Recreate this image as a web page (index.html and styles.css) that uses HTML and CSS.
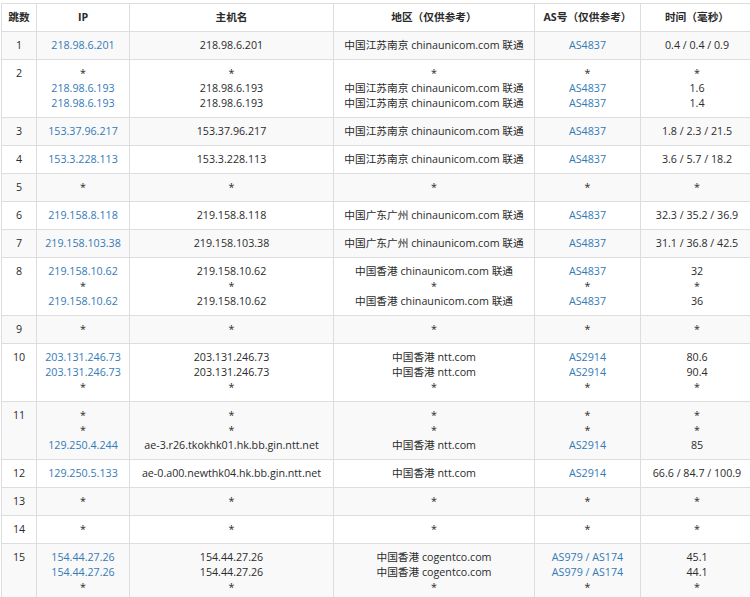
FILE: index.html
```html
<!DOCTYPE html>
<html lang="zh-CN">
<head>
<meta charset="utf-8">
<title>Traceroute</title>
<link rel="stylesheet" href="styles.css">
</head>
<body>
<table class="trace">
<colgroup>
<col class="c-hop"><col class="c-ip"><col class="c-host"><col class="c-loc"><col class="c-as"><col class="c-time">
</colgroup>
<thead>
<tr><th>跳数</th><th>IP</th><th>主机名</th><th>地区（仅供参考）</th><th>AS号（仅供参考）</th><th>时间（毫秒）</th></tr>
</thead>
<tbody>
<tr><td>1</td><td><a>218.98.6.201</a></td><td>218.98.6.201</td><td>中国江苏南京 chinaunicom.com 联通</td><td><a>AS4837</a></td><td>0.4 / 0.4 / 0.9</td></tr>
<tr><td>2</td><td>*<br><a>218.98.6.193</a><br><a>218.98.6.193</a></td><td>*<br>218.98.6.193<br>218.98.6.193</td><td>*<br>中国江苏南京 chinaunicom.com 联通<br>中国江苏南京 chinaunicom.com 联通</td><td>*<br><a>AS4837</a><br><a>AS4837</a></td><td>*<br>1.6<br>1.4</td></tr>
<tr><td>3</td><td><a>153.37.96.217</a></td><td>153.37.96.217</td><td>中国江苏南京 chinaunicom.com 联通</td><td><a>AS4837</a></td><td>1.8 / 2.3 / 21.5</td></tr>
<tr><td>4</td><td><a>153.3.228.113</a></td><td>153.3.228.113</td><td>中国江苏南京 chinaunicom.com 联通</td><td><a>AS4837</a></td><td>3.6 / 5.7 / 18.2</td></tr>
<tr><td>5</td><td>*</td><td>*</td><td>*</td><td>*</td><td>*</td></tr>
<tr><td>6</td><td><a>219.158.8.118</a></td><td>219.158.8.118</td><td>中国广东广州 chinaunicom.com 联通</td><td><a>AS4837</a></td><td>32.3 / 35.2 / 36.9</td></tr>
<tr><td>7</td><td><a>219.158.103.38</a></td><td>219.158.103.38</td><td>中国广东广州 chinaunicom.com 联通</td><td><a>AS4837</a></td><td>31.1 / 36.8 / 42.5</td></tr>
<tr><td>8</td><td><a>219.158.10.62</a><br>*<br><a>219.158.10.62</a></td><td>219.158.10.62<br>*<br>219.158.10.62</td><td>中国香港 chinaunicom.com 联通<br>*<br>中国香港 chinaunicom.com 联通</td><td><a>AS4837</a><br>*<br><a>AS4837</a></td><td>32<br>*<br>36</td></tr>
<tr><td>9</td><td>*</td><td>*</td><td>*</td><td>*</td><td>*</td></tr>
<tr><td>10</td><td><a>203.131.246.73</a><br><a>203.131.246.73</a><br>*</td><td>203.131.246.73<br>203.131.246.73<br>*</td><td>中国香港 ntt.com<br>中国香港 ntt.com<br>*</td><td><a>AS2914</a><br><a>AS2914</a><br>*</td><td>80.6<br>90.4<br>*</td></tr>
<tr><td>11</td><td>*<br>*<br><a>129.250.4.244</a></td><td>*<br>*<br>ae-3.r26.tkokhk01.hk.bb.gin.ntt.net</td><td>*<br>*<br>中国香港 ntt.com</td><td>*<br>*<br><a>AS2914</a></td><td>*<br>*<br>85</td></tr>
<tr><td>12</td><td><a>129.250.5.133</a></td><td>ae-0.a00.newthk04.hk.bb.gin.ntt.net</td><td>中国香港 ntt.com</td><td><a>AS2914</a></td><td>66.6 / 84.7 / 100.9</td></tr>
<tr><td>13</td><td>*</td><td>*</td><td>*</td><td>*</td><td>*</td></tr>
<tr><td>14</td><td>*</td><td>*</td><td>*</td><td>*</td><td>*</td></tr>
<tr><td>15</td><td><a>154.44.27.26</a><br><a>154.44.27.26</a><br>*</td><td>154.44.27.26<br>154.44.27.26<br>*</td><td>中国香港 cogentco.com<br>中国香港 cogentco.com<br>*</td><td><a>AS979 / AS174</a><br><a>AS979 / AS174</a><br>*</td><td>45.1<br>44.1<br>*</td></tr>
</tbody>
</table>
</body>
</html>
```
FILE: styles.css
```css
html, body {
  margin: 0;
  padding: 0;
  background: #fff;
  overflow: hidden;
}
body {
  padding: 3px 0 0 1px;
  font-family: "Open Sans", "Noto Sans CJK SC", sans-serif;
  font-size: 10.7px;
  line-height: 15px;
  color: #2b2b2b;
}
.trace {
  border-collapse: collapse;
  table-layout: fixed;
  width: 752px;
}
.c-hop { width: 35px; }
.c-ip { width: 93px; }
.c-host { width: 204px; }
.c-loc { width: 201px; }
.c-as { width: 106px; }
.c-time { width: 113px; }
.trace th, .trace td {
  border: 1px solid #ddd;
  padding: 6px 0;
  text-align: center;
  vertical-align: top;
  white-space: nowrap;
}
.trace th {
  font-weight: bold;
  vertical-align: middle;
}
.trace tbody tr:nth-child(odd) {
  background: #f9f9f9;
}
.trace a {
  color: #337ab7;
  text-decoration: none;
}
```
